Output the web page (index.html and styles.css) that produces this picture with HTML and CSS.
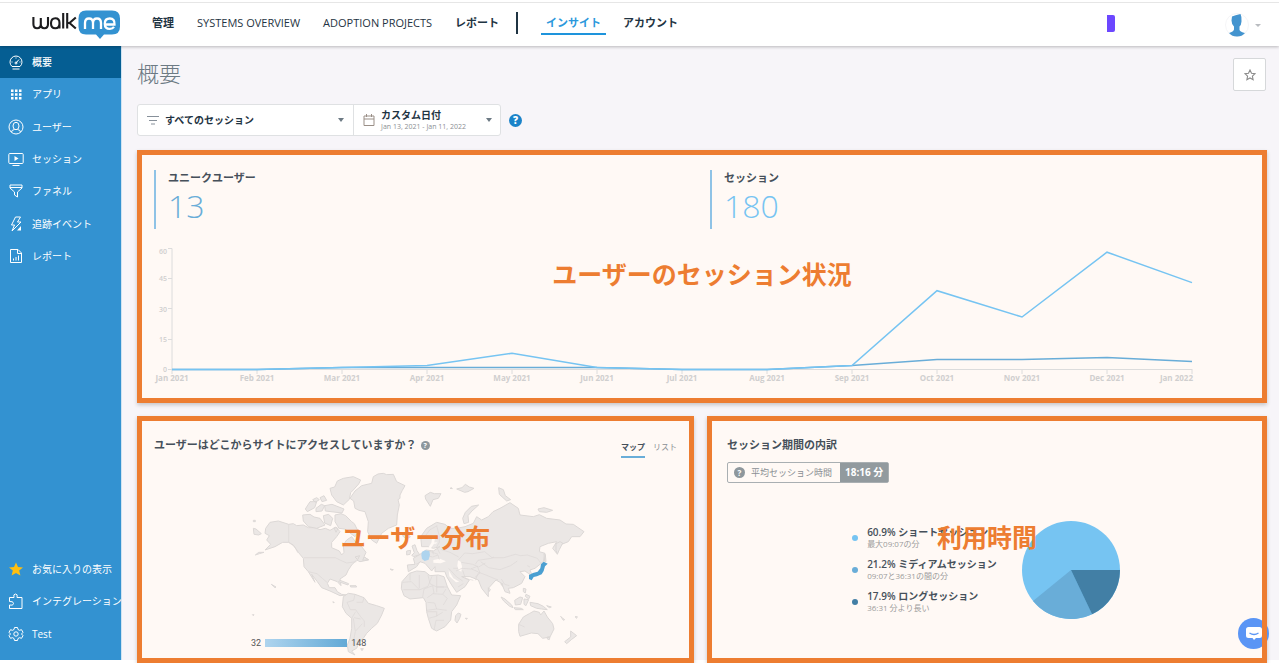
FILE: index.html
```html
<!DOCTYPE html>
<html lang="ja">
<head>
<meta charset="utf-8">
<meta name="viewport" content="width=device-width, initial-scale=1">
<title>概要 - WalkMe インサイト</title>
<link rel="stylesheet" href="styles.css">
</head>
<body>
<header class="topbar">
  <a class="logo" href="#" aria-label="walkme">
    <svg width="90" height="32" viewBox="0 0 90 32" fill="none">
      <g stroke="#1d1d1f" stroke-width="2.1" stroke-linejoin="round">
        <path d="M1.4 8v7q0 4.200 3.700 4.200T8.800 15V9M8.800 15q0 4.200 3.600 4.200t3.600-4.200V8"/>
        <path d="M27.500 19.500V14q0-4.800-4.200-4.800T19 14.200t4.300 5q4.200 0 4.200-5"/>
        <path d="M31.200 4v15.500M35.200 4v15.500M43.800 8.500l-6.300 5.500 6.300 5.500M35.500 14h2"/>
      </g>
      <path d="M54 1.500h26q8 0 8 8v8q0 8-8 8h-8L68 30l-4-4.500H54q-7.500 0-7.500-8v-8q0-8 7.500-8z" fill="#3392d1"/>
      <g stroke="#fff" stroke-width="2.300">
        <path d="M53 20v-6q0-4.500 4-4.500t4 4.500v6M61 14q0-4.500 4-4.500t4 4.500v6"/>
        <path d="M73.500 15.500h9q.4-6-4.700-6-5 0-5 5.200t5 5.200q2.800 0 4.200-2"/>
      </g>
    </svg>
  </a>
  <nav class="mainnav" aria-label="メイン">
    <a href="#" class="strong">管理</a>
    <a href="#">SYSTEMS OVERVIEW</a>
    <a href="#">ADOPTION PROJECTS</a>
    <a href="#" class="strong">レポート</a>
    <span class="divider"></span>
    <a href="#" class="strong current">インサイト</a>
    <a href="#" class="strong">アカウント</a>
  </nav>
  <span class="marker"></span>
  <button class="account" aria-label="アカウントメニュー">
    <svg width="36" height="26" viewBox="0 0 36 26">
      <circle cx="12" cy="13" r="11.500" fill="#fff" stroke="#f5f5f7"/>
      <path d="M7 4.500q3-1.500 8.500-2.500 1.500 3 1 7.500-.2 3.500-2 5v3.500q1 2 5.500 3-3 3.500-8 3.500T4 21q4.500-1.500 5-3.500v-3Q6.500 12 6.500 8.500z" fill="#4394cf"/>
      <path d="M30 12h6l-3 3z" fill="#b9bcc0"/>
    </svg>
  </button>
</header>
<div class="shell">
  <aside class="sidebar">
    <nav class="side-list side-top" aria-label="インサイト">
      <a href="#" class="active"><svg viewBox="0 0 16 16"><path d="M4 12.500a6 6 0 1 1 8 0zM4.500 15h7M8 9l3-3.500M3.500 8h1M8 3.500v1M11.500 8h1"/><circle cx="8" cy="9" r="1"/></svg>概要</a>
      <a href="#"><svg viewBox="0 0 16 16"><path class="solid" d="M3 3.500h2.500V6H3zM7 3.500h2.500V6H7zM11 3.500h2.500V6H11zM3 7.300h2.500v2.500H3zM7 7.300h2.500v2.500H7zM11 7.300h2.500v2.500H11zM3 11h2.500v2.500H3zM7 11h2.500v2.500H7zM11 11h2.500v2.500H11z"/></svg>アプリ</a>
      <a href="#"><svg viewBox="0 0 16 16"><circle cx="8" cy="8" r="7"/><ellipse cx="8" cy="7" rx="3" ry="3.700"/><path d="M3.500 13q0-2 3-2.500M12.500 13q0-2-3-2.500"/></svg>ユーザー</a>
      <a href="#"><svg viewBox="0 0 16 16"><rect x=".8" y="2.500" width="14.400" height="10" rx="1"/><path d="M4.500 14.500h7"/><path class="solid" d="M6.500 5v5l4-2.500z"/></svg>セッション</a>
      <a href="#"><svg viewBox="0 0 16 16"><path d="M2 2h12v3L9.500 9v5L6.500 12V9L2 5zM2 4.500h12"/></svg>ファネル</a>
      <a href="#"><svg viewBox="0 0 16 16"><path d="M7.500 1h5L9.500 6H13L4 15l2.500-6H3.500z"/><path class="solid" d="M13 10v4.500H9z"/></svg>追跡イベント</a>
      <a href="#"><svg viewBox="0 0 16 16"><path d="M2.500 1.500H10l3.500 3.500v9.500h-11zM9.500 1.500V5.500h4M5.500 12.500v-2M8 12.500V9M10.500 12.500v-5"/></svg>レポート</a>
    </nav>
    <nav class="side-list side-bottom" aria-label="設定">
      <a href="#"><svg viewBox="0 0 16 16"><path class="gold" d="M8 1.500l2 4.500 5 .4-3.800 3.200 1.200 4.900L8 11.900l-4.400 2.600 1.200-4.900L1 6.400 6 6z"/></svg>お気に入りの表示</a>
      <a href="#"><svg viewBox="0 0 16 16"><path d="M1.500 4.500H6Q5 1 7.500 1T9 4.500h5v11H1.500v-3.500q4 1 4-1.500T1.500 8.500z"/></svg>インテグレーション</a>
      <a href="#"><svg viewBox="0 0 16 16"><path d="M6.500 1.500h3l.5 2 1.500.8 2-.6L15 6.300 13.500 8l1.500 1.700-1.500 2.600-2-.6-1.500.8-.5 2h-3l-.5-2-1.500-.8-2 .6L1 9.700 2.500 8 1 6.300l1.500-2.600 2 .6L6 3.500z"/><circle cx="8" cy="8" r="2.200"/></svg>Test</a>
    </nav>
  </aside>
  <main class="content">
    <div class="titlebar">
      <h1>概要</h1>
      <button class="favorite" aria-label="お気に入りに追加"><svg width="12" height="12" viewBox="0 0 12 12"><path d="M6 1l1.500 3.300 3.500.4-2.600 2.400.7 3.600L6 8.900l-3.100 1.800.7-3.600L1 4.700l3.500-.4z" fill="none" stroke="#8b8b8b" stroke-width="1.100"/></svg></button>
    </div>
    <div class="filters">
      <div class="filterbox">
        <label class="session-filter">
          <svg width="12" height="10" viewBox="0 0 12 10"><path d="M0 1.500h12M2 5.500h8M4 9h4" stroke="#87909a"/></svg>
          <select aria-label="セッションフィルター"><option>すべてのセッション</option></select>
          <span class="caret"></span>
        </label>
        <button class="date-filter">
          <svg width="12" height="12" viewBox="0 0 12 12"><path d="M1 2h10v9.500H1zM1 5h10M3.500 0v3M8.500 0v3" fill="none" stroke="#9a8f87"/></svg>
          <span class="date-text"><b>カスタム日付</b><small>Jan 13, 2021 - Jan 11, 2022</small></span>
          <span class="caret"></span>
        </button>
      </div>
      <button class="help" aria-label="ヘルプ">?</button>
    </div>
    <div class="cards">
      <section class="card overview">
        <div class="stats">
          <div class="stat users"><h2>ユニークユーザー</h2><p>13</p></div>
          <div class="stat sessions"><h2>セッション</h2><p>180</p></div>
        </div>
        <svg class="chart" viewBox="0 0 1120 150" role="img" aria-label="ユーザーとセッションの推移">
          <path class="axis" d="M26 8.500h4V129.500H1050M26 38.500h4M26 68.500h4M26 99.500h4M26 129.500h4M30 129v5M115 129v5M200 129v5M285 129v5M370 129v5M455 129v5M540 129v5M625 129v5M710 129v5M795 129v5M880 129v5M965 129v5M1050 129v5"/>
          <g class="ylabels"><text x="25" y="14">60</text><text x="25" y="41">45</text><text x="25" y="72">30</text><text x="25" y="102">15</text><text x="25" y="132">0</text></g>
          <g class="xlabels"><text x="30" y="141">Jan 2021</text><text x="115" y="141">Feb 2021</text><text x="200" y="141">Mar 2021</text><text x="285" y="141">Apr 2021</text><text x="370" y="141">May 2021</text><text x="455" y="141">Jun 2021</text><text x="540" y="141">Jul 2021</text><text x="625" y="141">Aug 2021</text><text x="710" y="141">Sep 2021</text><text x="795" y="141">Oct 2021</text><text x="880" y="141">Nov 2021</text><text x="965" y="141">Dec 2021</text><text class="last" x="1051" y="141">Jan 2022</text></g>
          <polyline class="line users-line" points="30,129.500 115,129.500 200,127.500 285,127.500 370,127.500 455,127.500 540,129.500 625,129.500 710,125.500 795,119.400 880,119.400 965,117.400 1050,121.400"/>
          <polyline class="line sessions-line" points="30,129.500 115,129.500 200,127.500 285,125.500 370,113.300 455,127.500 540,129.500 625,129.500 710,125.500 795,50.700 880,77 965,12.200 1050,42.600"/>
        </svg>
        <p class="note note-overview">ユーザーのセッション状況</p>
      </section>
      <section class="card location">
        <div class="card-head">
          <h2>ユーザーはどこからサイトにアクセスしていますか？</h2><button class="hint" aria-label="説明">?</button>
          <div class="tabs"><button class="selected">マップ</button><button>リスト</button></div>
        </div>
        <svg class="map" viewBox="0 0 1080 575" role="img" aria-label="世界地図">
          <g class="land">
            <path d="M77 190l13-18 25-4 31 10 14-2 10 6 20-2 15 8 20 0 15 6 16-4 14 6 18-10 12 14-10 15-15 17 0 16 23 10 7 12 7-8-2-22 10-15 15-10 15 20 15 10 13 17-6 13 13 10-25 5-10-5-15 15-10 15-7 15-18 12 3 20-11-12-22-8-8 13 6 13 17 0 7 12 13 8 13 2-18 2-30-14-25-10-13-18-17-22 10 24-20-32-13-15-2-25-15-18-15-22-14-8-18 0-23 13-30 10 17-17-12-13 8-13-13-7z"/>
            <path d="M330 100l15-22 20-16 30-7 5-20 14-8 16-2 10 4 20-1 10 22 25 12-8 14-7 14 0 10-6 4 4 16-6 30-2 30-25 10-20 15-15 30-15-10-12-25 2-30-10-30-18-4-12-6-4-22z"/>
            <path d="M270 70l14-4 8-18 18-8 30-5 22 10-6 12-16 18-8 8-4 20-18 17-20-10-15-20zM254 122l22-4 36 14-6 12-50-6zM196 132l14-22 20 0-6 18-22 12zM218 104l12-6 8 6-12 8zM240 98l12-6 8 14-14 4zM228 130l16-12 10 4-8 16-18 2zM188 150l22-2 12 8 18 4 15 20-25 10-25-5-15-17zM250 152l16-4 12 12-6 22-18-8zM285 150l18-4 14 6 18 18 8 6 12 24-10 15-20-15-12-8-16-2-12-20zM282 188l12 2-6 12zM40 190l8 2 16 14-8 4-14-2zM72 262l-14 4-12 4 10-8zM345 276l14-4-6 12zM372 276l14 8-18 2z"/>
            <path d="M310 395l15-10 20 3 27 10 13 17 25 7 23 8-8 20-13 25-17 15-15 15-10 15-12 10-8 20-15 8 10 12-20-10-3-20 8-20 5-30 0-30-17-15-11-20z"/>
            <path d="M300 346l26 10-2 4-28-10zM330 362l18 0 2 4-18 0zM94 358l14 8-3 2zM450 312l10 2-4 2zM278 411l4 0 0 3zM40 166l6 0 0 4-6 0zM37 449l5 0-2 3zM362 551l8 0-4 6z"/>
            <path d="M484 370l2-20 22-25 22-7 25 2 15 12 25-2 17 5 10 30 13 25 27 2-12 28-15 20-3 25-17 20-25 13-15-8-10-30-5-20-2-28-8-14-40 4-18-10z"/>
            <path d="M505 320l-3-20 23-2-5-18 20-12 18-13 22 3 20-13-20 5-15-5-20 0-3-30 18-25 30-18 25 6 15 12 20 0 25-5 25-10 10-20 15 10 20-10 14-15 21-10 30-17 25 17 5 20 40 5 18-6 22 11 40 5 18 12 22 1 32 22-12 15-25 0-10 15-25 10-10 25-12-15 12-20-25 5-25 10-2 15 17 5-5 25-25 20-15 5 8 20-13-10-10-7-15 2 15 15-10 20-25 13-15 2 5 15-15-5-10-25-17-10-23 25 0 25-20-25-10-25-25-10-25 0 23 10-13 20-25 17-15-22-15-25-5-15-30 0 0-15-10 13-20-23-15-5-10 15z"/>
            <path d="M516 243l9-4 6 18 8 12-18 6-6-4 8-8zM500 258l12-2-2 12-10 2zM487 212l18-4 6 8-12 6zM555 92l16-10 12 4 20 0-8 14-16 4-8 20-14-22zM650 72l16-4 10-10 12 8 14 4-18 10-10 2zM776 68l14 6 6 18 16 12-12 4-22-20zM672 176l-4-16 8-18 18-18 22-4-20 18-12 14 2 20zM894 132l18-4 26 8-18 6-22-2zM655 444l8 4-4 12-8 14-6-8 2-14zM676 460l6 0-2 3zM783 396l12 6 20 18 4 8-10-4-18-16zM822 428l22 2 6 4-24 0zM824 406l16-10 8 2-6 20-16 2zM852 402l14 2-8 18-6-4zM850 370l8 2-2 12-6-4zM858 388l12 6-4 8-10-8zM870 412l24 4 16 8 12 10-18-2-14-2-18-8zM836 478l14-22 18-10 14-8 16 4 4 8 10-12 10 18 16 20 4 16-12 24-22 4-14-14-20-2-34 10-4-14zM922 516l8 0-2 8-6-2zM992 498l18 14-16 12-14 12-6-6 18-14zM782 356l6 0 0 8zM962 454l6 6 6 4-4 2zM920 422l14 4-6 2zM1005 455l7 0-2 5zM745 368l6 6-4 6zM630 70l5-2 2 3z"/>
            <path d="M948 236l12-6 8 4-10 20-6 14-4-12zM912 266l4 2 2 22-4 0z"/>
          </g>
          <g class="sea"><path d="M578 210l8 4-4 22-12 18-4-8 8-12zM580 285l20-4 18 8-16 6-22-2zM654 286l8 4 4 14-2 16-8-4-4-14zM570 234l22-2-4 4zM626 316l14 24 18 10-10 2-20-18z"/></g>
          <path class="borders" d="M146 178v54l18 14 10 18M192 278h94l16 8 18 8 30-4M205 320l26 6 16 14 14 12M345 388l-4 18-20 6 10 22 16 0 14 20 12 14 0 18M340 460l6 40-8 40M372 398l-4 14-18 0M335 460l12-20M362 462l-20-4M347 498l20-22M488 352l26-2 24 24M510 346v-22M490 374h50l24-10 12-30M538 330v40M548 396l4-24 26-10 4 22-20 14M564 330l6 26 20 10 22 0M590 332v50M590 366h34M578 386l30 2 14 12-12 20M562 412l22 2 6 18-30 4M590 432l30 4M566 460l22-6 20-12M582 496l6-30 24 0M608 388l10-16M560 440h30v14M552 218l18-24 22-12M590 182l8 30 0 20-8 14 10 20M550 260l22 0 22 8M560 272l18 4 16-6 4 14M578 256l2 12M528 298l14-8M604 254l26 8 26 14M654 286l20-22 24 2 36-6 22 18 36 0 34-10 16 4 20-2 30 10 18 24M664 292l34 6 18 8 20-12M706 298l8-12 40-6 8-4M722 290l24 18 34 6 32-12 20-14M648 318l18-8 26 2 20-8 8 20-16 14M668 316l8 24 24 6M706 346l10-24 22 8 28 12 8 2M694 312l20 8M784 342l10 16 14 4M640 310l14 0M626 310l24 26 18 12M654 366l16-10M870 306l-8-4M836 478l18 8"/>
          <path d="M546 260l10-4 12 2 2 12-4 14-12 4-8-6-2-12z" fill="#aed4ee"/>
          <path d="M911 290l12 6 -8 8-4 14-6 10-14 6-10 2-6 10-8-4 0-12 12-6 14-4 8-10 2-12z" fill="#4b9fd1"/>
        </svg>
        <div class="scale"><span>32</span><i></i><span>148</span></div>
        <p class="note note-location">ユーザー分布</p>
      </section>
      <section class="card duration">
        <h2>セッション期間の内訳</h2>
        <div class="average"><span class="average-label"><span class="hint">?</span>平均セッション時間</span><strong>18:16 分</strong></div>
        <div class="breakdown">
          <ul class="legend">
            <li class="short"><b>60.9% ショートセッション</b><small>最大09:07の分</small></li>
            <li class="medium"><b>21.2% ミディアムセッション</b><small>09:07と36:31の間の分</small></li>
            <li class="long"><b>17.9% ロングセッション</b><small>36:31 分より長い</small></li>
          </ul>
          <svg class="pie" width="98" height="98" viewBox="-49 -49 98 98" role="img" aria-label="セッション期間の円グラフ">
            <circle r="49" fill="#76c4f2"/>
            <path d="M0 0L-38 31A49 49 0 0 0 21.100 44.200z" fill="#69add8"/>
            <path d="M0 0H49A49 49 0 0 1 21.100 44.200z" fill="#427fa5"/>
          </svg>
        </div>
        <p class="note note-duration">利用時間</p>
        <button class="chat" aria-label="チャット"><svg width="18" height="16" viewBox="0 0 18 16"><path d="M3.500 1h11Q17 1 17 3.500v6q0 2.500-2.500 2.500H11l-2 2-1.500-2h-4Q1 12 1 9.500v-6Q1 1 3.500 1z" fill="#fff"/><path d="M4.500 7q4.500 3 9 0" fill="none" stroke="#5a95f5" stroke-width="1.300"/></svg></button>
      </section>
    </div>
  </main>
</div>
</body>
</html>
```
FILE: styles.css
```css
* { box-sizing: border-box; }
body {
  margin: 0;
  min-height: 100vh;
  display: flex;
  flex-direction: column;
  background: #fff;
  color: #1f3443;
  font: 11px/16px "Open Sans", "Noto Sans CJK JP", sans-serif;
}
h1, h2, p, ul { margin: 0; padding: 0; font-weight: inherit; }
a { color: inherit; text-decoration: none; }
button, select { font: inherit; color: inherit; border: 0; background: none; padding: 0; margin: 0; }
svg { display: block; flex: none; }

.topbar {
  position: relative;
  z-index: 1;
  display: flex;
  align-items: center;
  height: 46px;
  padding: 3px 16px 0 32px;
  background: linear-gradient(#fff 2px, #e6e6e6 2px, #e6e6e6 3px, #fff 3px);
  box-shadow: 0 1px 3px rgba(0, 0, 0, .25);
}
.logo { margin-right: 30px; }
.mainnav { display: flex; align-items: center; gap: 23px; flex: 1; margin-bottom: 4px; white-space: nowrap; }
.mainnav .strong { font-weight: 700; }
.divider { width: 2px; height: 22px; background: #1f3443; margin: 0 0 0 -6px; }
.mainnav .current {
  color: #2c98dc;
  padding: 4px 5px 2px;
  border-bottom: 2px solid #1e94dc;
  margin-right: -6px;
}
.marker { width: 8px; height: 17px; margin: 0 112px 3px 0; border-radius: 0 2px 2px 0; background: #6c47ff; }
.account { flex: none; margin: 0 2px 0 -2px; }

.shell { flex: 1; display: flex; }
.sidebar {
  flex: none;
  width: 122px;
  margin-bottom: 3px;
  padding-bottom: 10px;
  display: flex;
  flex-direction: column;
  justify-content: space-between;
  background: #3392d1;
  border-right: 1px solid #cfe3f2;
  color: #fff;
}
.side-list { display: grid; grid-auto-rows: 1fr; }
.side-top { height: 226px; }
.side-bottom { height: 97px; }
.side-list a { display: flex; align-items: center; gap: 8px; padding-left: 8px; white-space: nowrap; font-size: 10px; }
.side-list a.active { background: #055e93; font-weight: 500; }
.side-list svg { width: 16px; height: 16px; fill: none; stroke: #fff; stroke-width: 1; }
.side-list .solid { fill: #fff; stroke: none; }
.side-list .gold { fill: #ffbf0f; stroke: none; }

.content {
  flex: 1;
  min-width: 0;
  display: flex;
  flex-direction: column;
  padding: 12px 12px 0 15px;
  background: linear-gradient(#f7f5f9, #f7f5f9) no-repeat 0 0 / 100% calc(100% - 3px);
}
.titlebar { display: flex; justify-content: space-between; align-items: flex-start; height: 34px; }
h1 { font-size: 22px; line-height: 30px; font-weight: 300; color: #6d7a84; }
.favorite { width: 33px; height: 33px; display: grid; place-items: center; margin-right: 1px; background: #fff; border: 1px solid #d6d8da; border-radius: 2px; }
.filters { display: flex; align-items: center; gap: 8px; margin: 12px 0 14px; }
.filterbox { display: flex; height: 32px; background: #fff; border: 1px solid #dfe1e3; border-radius: 3px; }
.session-filter { display: flex; align-items: center; gap: 6px; width: 216px; padding: 0 9px; border-right: 1px solid #dfe1e3; }
.session-filter select { appearance: none; flex: 1; min-width: 0; font-size: 10px; font-weight: 700; outline: 0; }
.date-filter { display: flex; align-items: center; gap: 6px; width: 146px; padding: 0 8px 0 9px; text-align: left; }
.date-text { flex: 1; font-size: 10px; line-height: 12px; white-space: nowrap; }
.date-text b, .date-text small { display: block; }
.date-text small { font-size: 7px; color: #8b8f94; line-height: 11px; }
.caret { border: 3px solid transparent; border-top: 4px solid #6d7a84; border-bottom: 0; }
.help { width: 13px; height: 13px; border-radius: 50%; background: #1b83c9; color: #fff; font-size: 10px; line-height: 13px; font-weight: 800; }

.cards { flex: 1; display: grid; grid-template-columns: 557fr 560fr; grid-template-rows: auto 1fr; gap: 13px; }
.card { position: relative; min-width: 0; background: #fff9f5; padding: 5px; box-shadow: 0 2px 4px rgba(0, 0, 0, .2); }
.card::after { content: ""; position: absolute; inset: 0; border: 5px solid #ed7d31; pointer-events: none; }
.card h2 { font-size: 11px; font-weight: 700; color: #46505a; }
.overview { grid-column: 1 / -1; padding-bottom: 13px; }
.stats { display: grid; grid-template-columns: 1fr 1fr; column-gap: 4px; padding: 15px 0 11px 12px; }
.stat { height: 59px; padding-left: 12px; border-left: 2px solid #8fc3e6; }
.stat p { font-size: 32px; line-height: 40px; font-weight: 300; color: #69add8; }
.sessions p { color: #76c4f2; }
.chart { width: 100%; }
.axis { fill: none; stroke: #dcdcdc; }
.chart text { fill: #d0cfcf; }
.ylabels text { font-size: 7px; text-anchor: end; font-weight: 600; }
.xlabels text { font-size: 8px; text-anchor: middle; font-weight: 700; }
.xlabels .last { text-anchor: end; }
.line { fill: none; stroke-width: 1.5; stroke: #69add8; }
.sessions-line { stroke: #76c4f2; }

.note { position: absolute; left: 50%; top: 105px; transform: translateX(-50%); font-size: 25px; line-height: 32px; font-weight: 700; color: #ed7d31; white-space: nowrap; }
.note-overview { top: 108px; }

.location { display: flex; flex-direction: column; }
.card-head { display: flex; align-items: center; gap: 4px; height: 36px; margin-top: 6px; padding: 0 12px; }
.hint { width: 9px; height: 9px; border-radius: 50%; background: #8e979c; color: #fff; font-size: 7px; line-height: 9px; font-weight: 700; text-align: center; }
.tabs { display: flex; gap: 8px; margin: 6px 0 0 auto; font-size: 8px; color: #8b8f94; }
.tabs button { padding-bottom: 1px; border-bottom: 2px solid transparent; }
.tabs .selected { font-weight: 700; color: #46505a; border-color: #69add8; }
.map { width: 360px; max-width: 100%; margin: 2px 0 0 98px; }
.land { fill: #ebe7e5; stroke: #dcd8d6; stroke-width: 3; stroke-linejoin: round; }
.sea { fill: #fff9f5; }
.borders { fill: none; stroke: #dcd8d6; stroke-width: 2; }
.scale { position: absolute; left: 114px; bottom: 14px; display: flex; align-items: center; gap: 4px; font: 9px/12px Roboto, sans-serif; color: #555; }
.scale i { width: 82px; height: 8px; background: linear-gradient(90deg, #aed4ee, #62a9d6); }

.duration { padding: 21px 20px; }
.average { display: inline-flex; height: 21px; margin-top: 9px; border: 1px solid #a9afb2; border-radius: 2px; line-height: 19px; font-size: 9px; color: #8b8f94; }
.average-label { display: flex; align-items: center; gap: 6px; padding: 0 8px 0 6px; }
.average .hint { width: 11px; height: 11px; font-size: 8px; line-height: 11px; }
.average strong { padding: 0 5px; background: #929a9e; color: #fff; font-size: 10px; }
.breakdown { display: flex; align-items: center; justify-content: center; gap: 25px; margin: 38px 0 0 -2px; }
.legend { list-style: none; display: grid; gap: 8px; }
.legend li { position: relative; padding-left: 15px; white-space: nowrap; }
.legend li::before { content: ""; position: absolute; left: 0; top: 9px; width: 6px; height: 6px; border-radius: 50%; background: #76c4f2; }
.legend .medium::before { background: #69add8; }
.legend .long::before { background: #427fa5; }
.legend b, .legend small { display: block; line-height: 12px; }
.legend b { font-size: 10px; font-weight: 600; color: #46505a; }
.legend small { font-size: 8px; color: #9b9b9b; }
.chat { position: absolute; right: -2px; bottom: 14px; width: 31px; height: 31px; border-radius: 50%; background: #5a95f5; display: grid; place-items: center; }
```
